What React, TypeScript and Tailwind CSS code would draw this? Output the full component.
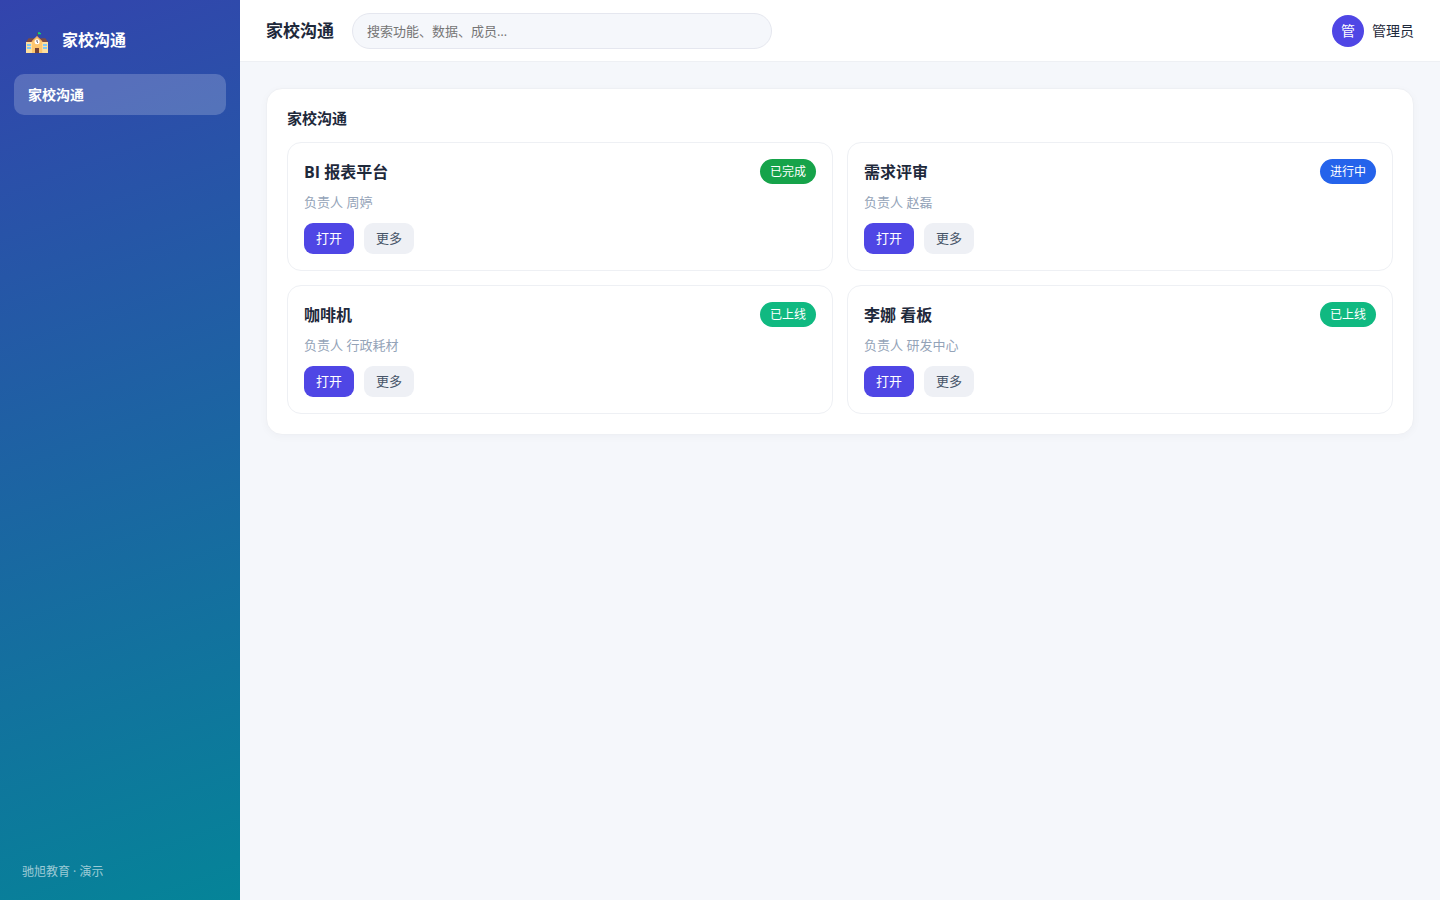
import React from "react";

type Item = {
  title: string;
  owner: string;
  status: string;
  badge: string;
};

const items: Item[] = [
  { title: "BI 报表平台", owner: "周婷", status: "已完成", badge: "bg-[#16a34a]" },
  { title: "需求评审", owner: "赵磊", status: "进行中", badge: "bg-[#2563eb]" },
  { title: "咖啡机", owner: "行政耗材", status: "已上线", badge: "bg-[#10b981]" },
  { title: "李娜 看板", owner: "研发中心", status: "已上线", badge: "bg-[#10b981]" },
];

function SchoolIcon() {
  return (
    <svg viewBox="0 0 22 22" className="mt-1.5 h-[22px] w-[22px]" aria-hidden="true">
      {/* flag */}
      <path d="M11.6 0.6v4" stroke="#7a4a3c" strokeWidth="0.8" />
      <path d="M12 0.3h2v.7h1v1.2h-3z" fill="#16d66b" />
      {/* side wings */}
      <path d="M2.6 6.2h16.8L22 10H0z" fill="#7d4b45" />
      <path d="M0 10h22v11H0z" fill="#ffdf9e" />
      <path d="M1 12h4v2H1zM1 15h4v2H1zM17 12h4v2h-4zM17 15h4v2h-4z" fill="#82c9f7" />
      {/* tower */}
      <path d="M11 4.5L16.2 9.4V21H6V9.4z" fill="#fdc670" />
      <path d="M5.6 9.6L11 4.3l5.4 5.3" fill="none" stroke="#f2a95a" strokeWidth="0.8" />
      <circle cx="11.1" cy="9.7" r="2.5" fill="#fff" />
      <path d="M11 8v2l1 .7" fill="none" stroke="#4a3b42" strokeWidth="0.8" />
      <path d="M9 16h4v5H9z" fill="#744235" />
    </svg>
  );
}

function Sidebar() {
  return (
    <aside className="flex w-60 shrink-0 flex-col bg-[linear-gradient(160deg,#3344ad,#058498)] px-3.5 py-5 text-white">
      <div className="flex h-10 items-center gap-3.5 px-3">
        <SchoolIcon />
        <span className="text-base font-bold">家校沟通</span>
      </div>
      <nav className="mt-3.5">
        <a
          href="#"
          className="flex h-[41px] items-center rounded-[10px] bg-white/20 px-3.5 text-sm font-bold"
        >
          家校沟通
        </a>
      </nav>
      <p className="mt-auto px-2 text-xs leading-4 text-white/60">驰旭教育 · 演示</p>
    </aside>
  );
}

function Header() {
  return (
    <header className="flex h-[62px] items-center border-b border-[#eef0f4] bg-white px-[26px]">
      <h1 className="text-[17px] font-bold">家校沟通</h1>
      <input
        type="search"
        aria-label="搜索"
        placeholder="搜索功能、数据、成员…"
        className="ml-[18px] h-9 w-[420px] rounded-full border border-[#e5e7ef] bg-[#f5f7fb] px-3.5 text-[13px] placeholder:text-[#757575]"
      />
      <div className="ml-auto flex items-center gap-2 text-sm">
        <span className="flex size-8 items-center justify-center rounded-full bg-[#4f46e5] text-white">
          管
        </span>
        <span>管理员</span>
      </div>
    </header>
  );
}

function ItemCard({ item }: { item: Item }) {
  return (
    <article className="rounded-[14px] border border-[#eef0f4] bg-white p-4">
      <div className="flex items-center justify-between">
        <h3 className="text-base leading-6 font-bold">{item.title}</h3>
        <span className={`rounded-full px-2.5 text-xs leading-[25px] text-white ${item.badge}`}>
          {item.status}
        </span>
      </div>
      <p className="mt-2 text-[13px] leading-5 text-[#94a3b8]">负责人 {item.owner}</p>
      <div className="mt-[11px] flex gap-2.5 text-[13px] leading-[31px]">
        <button type="button" className="rounded-[9px] bg-[#4f46e5] px-3 text-white">
          打开
        </button>
        <button type="button" className="rounded-[9px] bg-[#eef0f5] px-3 text-[#475569]">
          更多
        </button>
      </div>
    </article>
  );
}

export default function App() {
  return (
    <div className="flex min-h-screen bg-[#f5f7fb] font-['Open_Sans','Noto_Sans_CJK_SC',sans-serif] text-[#1e293b]">
      <Sidebar />
      <div className="min-w-0 flex-1">
        <Header />
        <main className="p-[26px]">
          <section className="rounded-2xl border border-[#eef0f4] bg-white p-5 shadow-[0_2px_8px_rgba(30,41,59,0.03)]">
            <h2 className="mb-3.5 text-[15px] leading-[19px] font-bold">家校沟通</h2>
            <div className="grid grid-cols-2 gap-3.5">
              {items.map((item) => (
                <ItemCard key={item.title} item={item} />
              ))}
            </div>
          </section>
        </main>
      </div>
    </div>
  );
}
